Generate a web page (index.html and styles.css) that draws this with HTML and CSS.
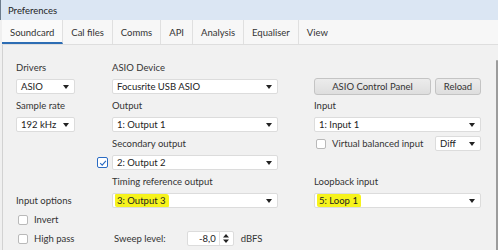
FILE: index.html
```html
<!DOCTYPE html>
<html lang="en">
<head>
    <meta charset="UTF-8">
    <title>Preferences</title>
    <link rel="stylesheet" href="styles.css">
</head>
<body>
    <div class="window">
        <div class="titlebar">Preferences</div>
        <div class="tabs">
            <div class="tab active">Soundcard</div>
            <div class="tab">Cal files</div>
            <div class="tab">Comms</div>
            <div class="tab">API</div>
            <div class="tab">Analysis</div>
            <div class="tab">Equaliser</div>
            <div class="tab last">View</div>
        </div>
        <div class="panel">
            <div class="grid">
                <div class="label c1">Drivers</div>
                <div class="label c3">ASIO Device</div>

                <div class="combo c1">ASIO</div>
                <div class="combo c3">Focusrite USB ASIO</div>
                <div class="button c5">ASIO Control Panel</div>
                <div class="button c7">Reload</div>

                <div class="label c1">Sample rate</div>
                <div class="label c3">Output</div>
                <div class="label c5">Input</div>

                <div class="combo c1">192 kHz</div>
                <div class="combo c3">1: Output 1</div>
                <div class="combo wide">1: Input 1</div>

                <div class="label c3">Secondary output</div>
                <div class="check-row c5"><span class="box"></span>Virtual balanced input</div>
                <div class="combo c7">Diff</div>

                <div class="check-only c2"><span class="box checked"><svg viewBox="0 0 10 10" width="8" height="8"><path d="M1.5 5.2 L4 7.6 L8.6 2.4" fill="none" stroke="#2b6cc4" stroke-width="1.4"/></svg></span></div>
                <div class="combo c3">2: Output 2</div>

                <div class="label c3">Timing reference output</div>
                <div class="label wide">Loopback input</div>

                <div class="label c1">Input options</div>
                <div class="combo c3"><span class="mark">3: Output 3</span></div>
                <div class="combo wide"><span class="mark">5: Loop 1</span></div>

                <div class="check-row left"><span class="box"></span>Invert</div>

                <div class="check-row left"><span class="box"></span>High pass</div>
                <div class="sweep">
                    <span>Sweep level:</span>
                    <div class="spin">
                        <span class="spin-value">-8,0</span>
                        <span class="spin-arrows">
                            <svg viewBox="0 0 6 9" width="6" height="9"><path d="M3 0 L6 3.5 L0 3.5 Z M3 9 L6 5.5 L0 5.5 Z" fill="#222"/></svg>
                        </span>
                    </div>
                    <span class="unit">dBFS</span>
                </div>
            </div>
            <div class="scroll"></div>
        </div>
    </div>
</body>
</html>
```

FILE: styles.css
```css
*{
    margin: 0;
    padding: 0;
    box-sizing: border-box;
}

body{
    width: 498px;
    height: 250px;
    overflow: hidden;
    font-family: "Lato", "Open Sans", sans-serif;
    font-size: 9.5px;
    color: #2a2a2a;
    background-color: #f0f0f0;
}

.window{
    height: 250px;
    display: flex;
    flex-direction: column;
}

.titlebar{
    height: 20px;
    padding-left: 7px;
    display: flex;
    align-items: center;
    background-color: #dbe6f3;
    border-left: 1px solid #6d7c8c;
    color: #1e1e1e;
}

.tabs{
    height: 25px;
    margin-left: 2px;
    display: flex;
    background-color: #f7f7f7;
    border-bottom: 1px solid #dedede;
}

.tab{
    padding: 0 8px;
    display: flex;
    align-items: center;
    border-right: 1px solid #e0e0e0;
    color: #333;
}

.tab.active{
    background-color: #fafafa;
    border-bottom: 2px solid #2d6db4;
    padding-top: 2px;
}

.tab.last{
    border-right: none;
}

.panel{
    flex: 1;
    margin-left: 2px;
    border-left: 1px solid #d2d2d2;
    display: flex;
    background-color: #f1f1f1;
}

.grid{
    padding: 13px 0 0 13px;
    display: grid;
    grid-template-columns: 59px 37px 166px 36px 117px 4px 46px;
    grid-auto-rows: 19px;
    align-items: center;
}

.c1{ grid-column: 1; }
.c2{ grid-column: 2; }
.c3{ grid-column: 3; }
.c5{ grid-column: 5; }
.c7{ grid-column: 7; }
.wide{ grid-column: 5 / 8; }
.left{ grid-column: 1 / 3; }

.label{
    color: #333;
}

.combo{
    position: relative;
    height: 15px;
    padding-left: 4px;
    display: flex;
    align-items: center;
    background-color: #fff;
    border: 1px solid #dcdcdc;
    border-radius: 2px;
    color: #222;
}

.combo::after{
    content: "";
    position: absolute;
    right: 5px;
    top: 5px;
    border-left: 3.5px solid transparent;
    border-right: 3.5px solid transparent;
    border-top: 4px solid #222;
}

.button{
    height: 17px;
    display: flex;
    align-items: center;
    justify-content: center;
    background: linear-gradient(#ececec, #dedede);
    border: 1px solid #c4c4c4;
    border-radius: 3px;
    color: #333;
}

.check-row{
    display: flex;
    align-items: center;
    gap: 6px;
    padding-left: 2px;
    color: #333;
}

.check-only{
    display: flex;
    justify-content: flex-end;
    padding-right: 4px;
}

.box{
    width: 10px;
    height: 10px;
    display: flex;
    align-items: center;
    justify-content: center;
    background-color: #fff;
    border: 1px solid #b9b9b9;
    border-radius: 2px;
}

.box.checked{
    width: 11px;
    height: 11px;
    border: 1px solid #2b6cc4;
}

.mark{
    background-color: #f6f31c;
    padding: 1px 3px 1px 2px;
    margin-left: -2px;
    border-radius: 1px 3px 1px 2px;
}

.sweep{
    grid-column: 3 / 5;
    display: flex;
    align-items: center;
    padding-left: 2px;
    color: #333;
}

.spin{
    margin-left: 21px;
    width: 47px;
    height: 15px;
    display: flex;
    align-items: center;
    background-color: #fff;
    border: 1px solid #dcdcdc;
    border-radius: 2px;
}

.spin-value{
    flex: 1;
    text-align: right;
    padding-right: 3px;
    color: #222;
}

.spin-arrows{
    width: 14px;
    height: 13px;
    display: flex;
    align-items: center;
    justify-content: center;
    border-left: 1px solid #e2e2e2;
}

.unit{
    margin-left: 7px;
}

.scroll{
    margin: 15px 0 0 auto;
    width: 2px;
    background-color: #9c9c9c;
    border-radius: 1px 1px 0 0;
}
```
